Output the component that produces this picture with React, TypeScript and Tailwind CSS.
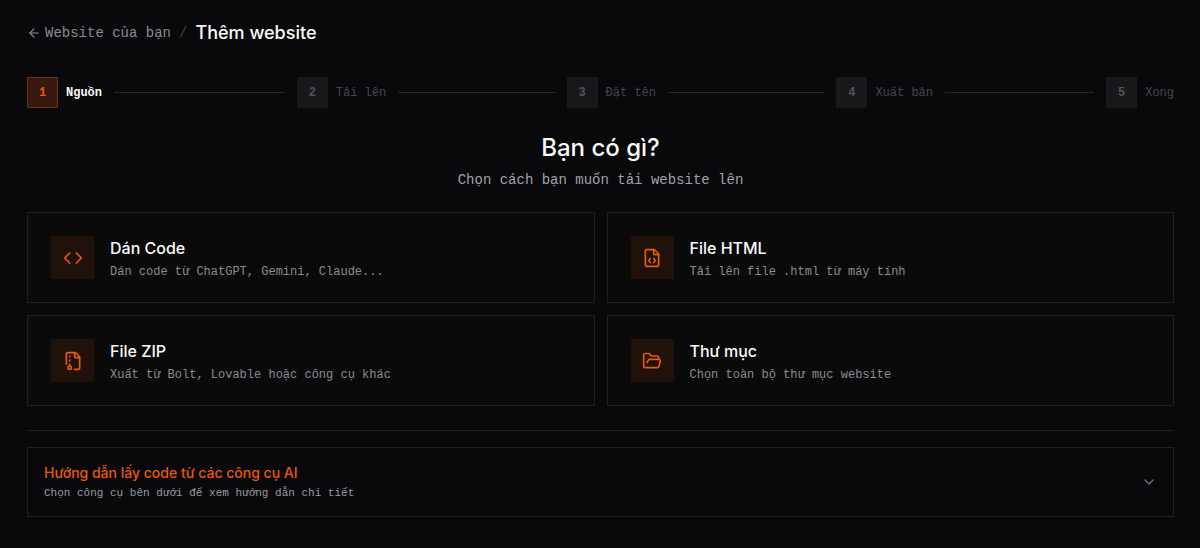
import {
  ArrowLeft,
  ChevronDown,
  Code,
  FileArchive,
  FileCode,
  FolderOpen,
  type LucideIcon,
} from "lucide-react";
import { clsx } from "clsx";

const steps = ["Nguồn", "Tải lên", "Đặt tên", "Xuất bản", "Xong"];

const sources: { icon: LucideIcon; title: string; description: string }[] = [
  {
    icon: Code,
    title: "Dán Code",
    description: "Dán code từ ChatGPT, Gemini, Claude...",
  },
  {
    icon: FileCode,
    title: "File HTML",
    description: "Tải lên file .html từ máy tính",
  },
  {
    icon: FileArchive,
    title: "File ZIP",
    description: "Xuất từ Bolt, Lovable hoặc công cụ khác",
  },
  {
    icon: FolderOpen,
    title: "Thư mục",
    description: "Chọn toàn bộ thư mục website",
  },
];

function Breadcrumb() {
  return (
    <nav className="flex items-center gap-2">
      <a
        href="#websites"
        className="flex items-center gap-1 text-sm leading-6 text-[#8b8b94] hover:text-white"
      >
        <ArrowLeft className="size-3.5" />
        Website của bạn
      </a>
      <span className="text-sm leading-6 text-zinc-700">/</span>
      <h1 className="font-[Inter,sans-serif] text-lg leading-6 font-medium text-zinc-50">
        Thêm website
      </h1>
    </nav>
  );
}

function Stepper({ current }: { current: number }) {
  return (
    <ol className="mt-8 flex items-center">
      {steps.map((label, index) => {
        const active = index === current;
        const last = index === steps.length - 1;

        return (
          <li
            key={label}
            aria-current={active ? "step" : undefined}
            className={clsx("flex items-center", !last && "flex-1")}
          >
            <span
              className={clsx(
                "flex size-[31px] shrink-0 items-center justify-center border text-xs font-bold",
                active
                  ? "border-[#6f300f] bg-[#36190f] text-[#ea580c]"
                  : "border-[#18181b] bg-[#18181b] text-zinc-600"
              )}
            >
              {index + 1}
            </span>
            <span
              className={clsx(
                "ml-2 text-xs whitespace-nowrap",
                active ? "font-bold text-zinc-50" : "text-[#45454b]"
              )}
            >
              {label}
            </span>
            {!last && <span className="mx-3 h-px flex-1 bg-zinc-800" />}
          </li>
        );
      })}
    </ol>
  );
}

function SourceGrid() {
  return (
    <div className="mt-[22px] grid grid-cols-2 gap-3">
      {sources.map(({ icon: Icon, title, description }) => (
        <button
          key={title}
          type="button"
          className="flex min-h-[91px] items-center gap-4 border border-[#202022] bg-[#0a0a0a] px-[23px] py-5 text-left hover:border-[#ea580c]"
        >
          <span className="flex size-[43px] shrink-0 items-center justify-center bg-[#20120b] text-[#ea580c]">
            <Icon className="size-5" />
          </span>
          <span className="flex flex-col gap-1">
            <span className="font-[Inter,sans-serif] text-base leading-6 font-medium text-zinc-50">
              {title}
            </span>
            <span className="text-xs text-[#8b8b94]">{description}</span>
          </span>
        </button>
      ))}
    </div>
  );
}

function Guide() {
  return (
    <section className="mt-6 border-t border-[#202022] pt-4">
      <button
        type="button"
        aria-expanded={false}
        className="flex w-full items-center justify-between border border-[#202022] px-4 py-[15px] text-left"
      >
        <span className="flex flex-col gap-0.5">
          <span className="font-[Inter,sans-serif] text-sm leading-5 font-medium text-[#ea580c]">
            Hướng dẫn lấy code từ các công cụ AI
          </span>
          <span className="text-[11px] leading-4 text-[#9a9aa3]">
            Chọn công cụ bên dưới để xem hướng dẫn chi tiết
          </span>
        </span>
        <ChevronDown className="size-4 text-zinc-500" />
      </button>
    </section>
  );
}

export default function App() {
  return (
    <main className="min-h-screen bg-zinc-950 pt-[21px] pr-[26px] pb-8 pl-[27px] font-['Liberation_Mono',monospace]">
      <Breadcrumb />
      <Stepper current={0} />
      <header className="mt-6 text-center">
        <h2 className="font-[Inter,sans-serif] text-2xl leading-8 font-medium text-zinc-50">
          Bạn có gì?
        </h2>
        <p className="mt-1.5 text-sm text-[#a1a1aa]">
          Chọn cách bạn muốn tải website lên
        </p>
      </header>
      <SourceGrid />
      <Guide />
    </main>
  );
}
